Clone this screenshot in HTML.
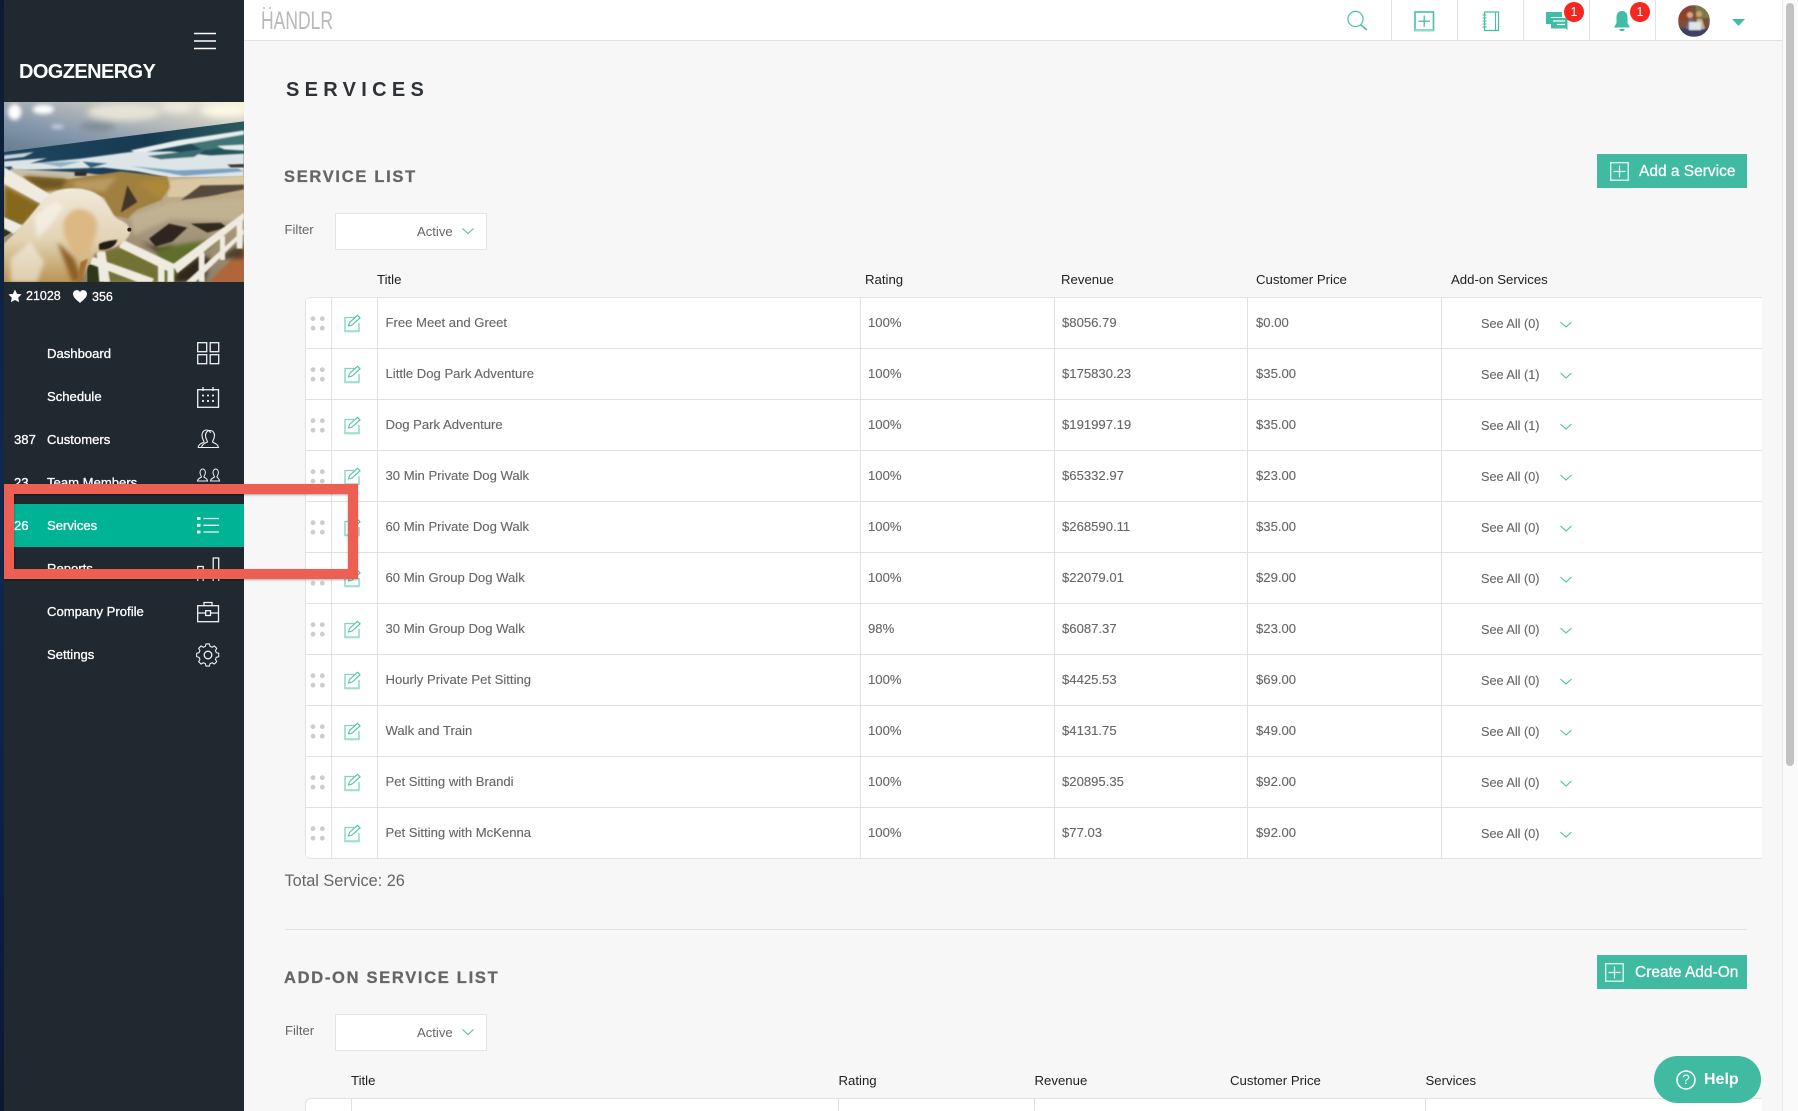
<!DOCTYPE html>
<html><head><meta charset="utf-8"><title>Services</title>
<style>
html,body{margin:0;padding:0;width:1798px;height:1111px;overflow:hidden;background:#f7f7f7}
body{position:relative;font-family:"Liberation Sans",Arial,sans-serif;color:#666;font-size:13.1px}
.a{position:absolute;white-space:nowrap}
svg{position:absolute;overflow:visible}
.n{position:absolute;color:#fff;white-space:nowrap;font-size:13.1px;line-height:20px;-webkit-text-stroke:.3px #fff}
.th{position:absolute;color:#222;font-size:13.2px;line-height:18px;white-space:nowrap}
.r{position:absolute;left:305px;width:1457px;height:51px;background:#fff;border-top:1px solid #e2e2e2;box-sizing:border-box;color:#666}
.r b{position:absolute;top:0;bottom:0;width:1px;background:#e2e2e2;font-weight:normal}
.r span{position:absolute;top:16px;line-height:18px;white-space:nowrap;font-size:13.1px;-webkit-text-stroke:.12px #666}
.r span.s{top:17px;font-size:12.700px}
.btn{position:absolute;background:#40bba2;color:#fff;height:34px;width:150px;left:1597px}
.btn span{position:absolute;top:8px;font-size:15.500px;line-height:20px;white-space:nowrap;-webkit-text-stroke:.25px #fff}
.sel{position:absolute;left:335px;width:152px;height:37px;background:#fff;border:1px solid #e4e4e4;box-sizing:border-box}
.sel span{position:absolute;left:81px;top:9px;line-height:18px;font-size:13.1px}
h1,h2{margin:0;position:absolute;white-space:nowrap}
h2{font-size:16.500px;line-height:20px;letter-spacing:1.7px;color:#666;font-weight:bold;-webkit-text-stroke:.3px #666}
</style></head><body>

<svg width="0" height="0" style="position:absolute">
<defs>
<g id="ed" fill="none">
<path d="M10 1.500H1v14h14V7" stroke="#7dd4bf" stroke-width="1.300"/>
<path d="M1 15.200h14" stroke="#9be0cf" stroke-width="2"/>
<path d="M4.500 11.500l1-3.500L13.500.8l2.600 2.500-8 7.200z" stroke="#4cc4a9" stroke-width="1.100" transform="translate(0 -1.500)"/>
</g>
<g id="dt" fill="#cdcdcd"><circle cx="2.200" cy="2.200" r="2.400"/><circle cx="11.500" cy="2.200" r="2.400"/><circle cx="2.200" cy="11.700" r="2.400"/><circle cx="11.500" cy="11.700" r="2.400"/></g>
<path id="ch" d="M.5 .5L6 5.500 11.500 .5" fill="none" stroke="#45c3a9" stroke-width="1.100"/>
</defs>
</svg>

<!-- main rows -->
<div class="r" style="top:297px;border-top-left-radius:6px"><b style="left:26px"></b><b style="left:72px"></b><b style="left:555px"></b><b style="left:749px"></b><b style="left:942px"></b><b style="left:1136px"></b><span style="left:80.500px">Free Meet and Greet</span><span style="left:563px">100%</span><span style="left:757px">$8056.79</span><span style="left:951px">$0.00</span><span class="s" style="left:1176px">See All (0)</span></div>
<div class="r" style="top:348px"><b style="left:26px"></b><b style="left:72px"></b><b style="left:555px"></b><b style="left:749px"></b><b style="left:942px"></b><b style="left:1136px"></b><span style="left:80.500px">Little Dog Park Adventure</span><span style="left:563px">100%</span><span style="left:757px">$175830.23</span><span style="left:951px">$35.00</span><span class="s" style="left:1176px">See All (1)</span></div>
<div class="r" style="top:399px"><b style="left:26px"></b><b style="left:72px"></b><b style="left:555px"></b><b style="left:749px"></b><b style="left:942px"></b><b style="left:1136px"></b><span style="left:80.500px">Dog Park Adventure</span><span style="left:563px">100%</span><span style="left:757px">$191997.19</span><span style="left:951px">$35.00</span><span class="s" style="left:1176px">See All (1)</span></div>
<div class="r" style="top:450px"><b style="left:26px"></b><b style="left:72px"></b><b style="left:555px"></b><b style="left:749px"></b><b style="left:942px"></b><b style="left:1136px"></b><span style="left:80.500px">30 Min Private Dog Walk</span><span style="left:563px">100%</span><span style="left:757px">$65332.97</span><span style="left:951px">$23.00</span><span class="s" style="left:1176px">See All (0)</span></div>
<div class="r" style="top:501px"><b style="left:26px"></b><b style="left:72px"></b><b style="left:555px"></b><b style="left:749px"></b><b style="left:942px"></b><b style="left:1136px"></b><span style="left:80.500px">60 Min Private Dog Walk</span><span style="left:563px">100%</span><span style="left:757px">$268590.11</span><span style="left:951px">$35.00</span><span class="s" style="left:1176px">See All (0)</span></div>
<div class="r" style="top:552px"><b style="left:26px"></b><b style="left:72px"></b><b style="left:555px"></b><b style="left:749px"></b><b style="left:942px"></b><b style="left:1136px"></b><span style="left:80.500px">60 Min Group Dog Walk</span><span style="left:563px">100%</span><span style="left:757px">$22079.01</span><span style="left:951px">$29.00</span><span class="s" style="left:1176px">See All (0)</span></div>
<div class="r" style="top:603px"><b style="left:26px"></b><b style="left:72px"></b><b style="left:555px"></b><b style="left:749px"></b><b style="left:942px"></b><b style="left:1136px"></b><span style="left:80.500px">30 Min Group Dog Walk</span><span style="left:563px">98%</span><span style="left:757px">$6087.37</span><span style="left:951px">$23.00</span><span class="s" style="left:1176px">See All (0)</span></div>
<div class="r" style="top:654px"><b style="left:26px"></b><b style="left:72px"></b><b style="left:555px"></b><b style="left:749px"></b><b style="left:942px"></b><b style="left:1136px"></b><span style="left:80.500px">Hourly Private Pet Sitting</span><span style="left:563px">100%</span><span style="left:757px">$4425.53</span><span style="left:951px">$69.00</span><span class="s" style="left:1176px">See All (0)</span></div>
<div class="r" style="top:705px"><b style="left:26px"></b><b style="left:72px"></b><b style="left:555px"></b><b style="left:749px"></b><b style="left:942px"></b><b style="left:1136px"></b><span style="left:80.500px">Walk and Train</span><span style="left:563px">100%</span><span style="left:757px">$4131.75</span><span style="left:951px">$49.00</span><span class="s" style="left:1176px">See All (0)</span></div>
<div class="r" style="top:756px"><b style="left:26px"></b><b style="left:72px"></b><b style="left:555px"></b><b style="left:749px"></b><b style="left:942px"></b><b style="left:1136px"></b><span style="left:80.500px">Pet Sitting with Brandi</span><span style="left:563px">100%</span><span style="left:757px">$20895.35</span><span style="left:951px">$92.00</span><span class="s" style="left:1176px">See All (0)</span></div>
<div class="r" style="top:807px;height:52px;border-bottom:1px solid #e2e2e2;border-bottom-left-radius:6px"><b style="left:26px"></b><b style="left:72px"></b><b style="left:555px"></b><b style="left:749px"></b><b style="left:942px"></b><b style="left:1136px"></b><span style="left:80.500px">Pet Sitting with McKenna</span><span style="left:563px">100%</span><span style="left:757px">$77.03</span><span style="left:951px">$92.00</span><span class="s" style="left:1176px">See All (0)</span></div>
<div class="a" style="left:305px;top:300px;width:1px;height:555px;background:#e2e2e2"></div>

<!-- row icons -->
<svg style="left:0;top:0" width="1798" height="900">
<use href="#dt" x="310.800" y="316.500"/><use href="#dt" x="310.800" y="367.500"/><use href="#dt" x="310.800" y="418.500"/><use href="#dt" x="310.800" y="469.500"/><use href="#dt" x="310.800" y="520.500"/><use href="#dt" x="310.800" y="571.500"/><use href="#dt" x="310.800" y="622.500"/><use href="#dt" x="310.800" y="673.500"/><use href="#dt" x="310.800" y="724.500"/><use href="#dt" x="310.800" y="775.500"/><use href="#dt" x="310.800" y="826.500"/>
<use href="#ed" x="344" y="316"/><use href="#ed" x="344" y="367"/><use href="#ed" x="344" y="418"/><use href="#ed" x="344" y="469"/><use href="#ed" x="344" y="520"/><use href="#ed" x="344" y="571"/><use href="#ed" x="344" y="622"/><use href="#ed" x="344" y="673"/><use href="#ed" x="344" y="724"/><use href="#ed" x="344" y="775"/><use href="#ed" x="344" y="826"/>
<use href="#ch" x="1560" y="321.500"/><use href="#ch" x="1560" y="372.500"/><use href="#ch" x="1560" y="423.500"/><use href="#ch" x="1560" y="474.500"/><use href="#ch" x="1560" y="525.500"/><use href="#ch" x="1560" y="576.500"/><use href="#ch" x="1560" y="627.500"/><use href="#ch" x="1560" y="678.500"/><use href="#ch" x="1560" y="729.500"/><use href="#ch" x="1560" y="780.500"/><use href="#ch" x="1560" y="831.500"/>
</svg>

<!-- top bar -->
<div class="a" style="left:244px;top:0;width:1538px;height:41px;background:#fff;border-bottom:1px solid #e2e2e2;box-sizing:border-box"></div>
<svg style="left:261px;top:6px" width="80" height="28">
<text x="0" y="23" font-family="Liberation Sans" font-size="25" fill="#b9b9b9" textLength="72" lengthAdjust="spacingAndGlyphs">HANDLR</text>
<circle cx="3" cy="2" r="1" fill="#b9b9b9"/><circle cx="9" cy="2" r="1" fill="#b9b9b9"/>
</svg>
<div class="a" style="left:1391px;top:0;width:1px;height:40px;background:#e2e2e2"></div>
<div class="a" style="left:1457px;top:0;width:1px;height:40px;background:#e2e2e2"></div>
<div class="a" style="left:1523px;top:0;width:1px;height:40px;background:#e2e2e2"></div>
<div class="a" style="left:1589px;top:0;width:1px;height:40px;background:#e2e2e2"></div>
<div class="a" style="left:1655px;top:0;width:1px;height:40px;background:#e2e2e2"></div>
<svg style="left:0;top:0" width="1798" height="41" fill="none" stroke="#47c0a8">
<circle cx="1355.500" cy="19" r="7.600" stroke-width="1.200"/><path d="M1361 25l6 5" stroke-width="1.500"/>
<rect x="1415" y="12" width="18.500" height="18.500" stroke-width="1.600"/><path d="M1424.200 15.500v11.500M1418.500 21.200h11.500" stroke-width="1.300"/><path d="M1415 30h18.500" stroke="#8ddbc9" stroke-width="2"/>
<rect x="1484.500" y="12" width="14" height="18.500" stroke-width="1.300"/><path d="M1495.500 12v18.500" stroke-width="1.100"/><path d="M1482.500 15h4M1482.500 18h4M1482.500 21h4M1482.500 24h4M1482.500 27h4" stroke-width="1"/>
<path d="M1546 12h16v5h-11v7h-5z" fill="#42bda5" stroke="none"/><path d="M1551 18h16.500v12l-2-1.500H1551z" fill="#42bda5" stroke="none"/><path d="M1553 21h12M1557 24.500h8" stroke="#fff" stroke-width="1.200"/>
<path d="M1622 11c-4 0-5.500 3-5.500 6.500v5.500l-2.500 4.500h16l-2.500-4.500v-5.500c0-3.500-1.500-6.500-5.500-6.500z" fill="#42bda5" stroke="none"/><path d="M1619 29h6l-1.500 2h-3z" fill="#42bda5" stroke="none"/>
<path d="M1732 19h13l-6.500 7z" fill="#42bda5" stroke="none"/>
</svg>
<div class="a" style="left:1564px;top:2px;width:20px;height:20px;border-radius:50%;background:#f7271f;color:#fff;font-size:12.500px;line-height:20px;text-align:center">1</div>
<div class="a" style="left:1630px;top:2px;width:20px;height:20px;border-radius:50%;background:#f7271f;color:#fff;font-size:12.500px;line-height:20px;text-align:center">1</div>
<svg style="left:1678px;top:5px" width="32" height="32" viewBox="0 0 32 32">
<defs><clipPath id="av"><circle cx="16" cy="16" r="16"/></clipPath><filter id="abl"><feGaussianBlur stdDeviation=".7"/></filter></defs>
<g clip-path="url(#av)"><g filter="url(#abl)">
<rect width="32" height="32" fill="#7a5038"/><rect x="0" y="0" width="12" height="16" fill="#8d3f2c"/><rect x="18" y="0" width="14" height="13" fill="#7a7a48"/><rect y="23" width="32" height="9" fill="#3c3f62"/>
<circle cx="12" cy="10" r="3" fill="#d9a57f"/><circle cx="21" cy="9" r="3" fill="#caa06f"/><path d="M8 24l3-10h4l2 10z" fill="#5b7294"/><path d="M17 24l2-10h5l3 10z" fill="#c4b396"/><rect x="11" y="17" width="12" height="8" fill="#dfe4e6"/>
</g></g></svg>

<!-- scrollbar -->
<div class="a" style="left:1782px;top:0;width:16px;height:1111px;background:#fafafa;border-left:1px solid #e9e9e9;box-sizing:border-box"></div>
<div class="a" style="left:1786px;top:3px;width:8px;height:763px;background:#c1c1c1;border-radius:4px"></div>

<!-- page headings -->
<h1 style="left:286px;top:79px;font-size:20px;line-height:23px;letter-spacing:5.300px;color:#2f3338;font-weight:bold">SERVICES</h1>
<h2 style="left:284px;top:167px">SERVICE LIST</h2>
<div class="btn" style="top:154px"><span style="left:42px">Add a Service</span></div>
<svg style="left:1610px;top:162px" width="19" height="19" fill="none" stroke="#e6f7f3"><rect x=".7" y=".7" width="17.500" height="17.500" stroke-width="1.300"/><path d="M9.500 3.500v12M3.500 9.500h12" stroke-width="1.200"/></svg>
<div class="a" style="left:284.500px;top:222px;line-height:16px">Filter</div>
<div class="sel" style="top:213px"><span>Active</span></div>
<svg style="left:462px;top:228px" width="13" height="8"><use href="#ch"/></svg>
<div class="th" style="left:377px;top:271px">Title</div>
<div class="th" style="left:865px;top:271px">Rating</div>
<div class="th" style="left:1061px;top:271px">Revenue</div>
<div class="th" style="left:1256px;top:271px">Customer Price</div>
<div class="th" style="left:1451px;top:271px">Add-on Services</div>

<div class="a" style="left:284.500px;top:871px;font-size:16.300px;line-height:20px">Total Service: 26</div>
<div class="a" style="left:285px;top:929px;width:1462px;height:1px;background:#e2e2e2"></div>
<h2 style="left:284px;top:968px">ADD-ON SERVICE LIST</h2>
<div class="btn" style="top:955px"><span style="left:38px">Create Add-On</span></div>
<svg style="left:1605px;top:963px" width="19" height="19" fill="none" stroke="#e6f7f3"><rect x=".7" y=".7" width="17.500" height="17.500" stroke-width="1.300"/><path d="M9.500 3.500v12M3.500 9.500h12" stroke-width="1.200"/></svg>
<div class="a" style="left:285px;top:1023px;line-height:16px">Filter</div>
<div class="sel" style="top:1014px"><span>Active</span></div>
<svg style="left:462px;top:1029px" width="13" height="8"><use href="#ch"/></svg>
<div class="th" style="left:351px;top:1072px">Title</div>
<div class="th" style="left:838.500px;top:1072px">Rating</div>
<div class="th" style="left:1034.500px;top:1072px">Revenue</div>
<div class="th" style="left:1230px;top:1072px">Customer Price</div>
<div class="th" style="left:1425.500px;top:1072px">Services</div>
<div class="a" style="left:305px;top:1098px;width:1457px;height:13px;background:#fff;border-top:1px solid #e2e2e2;border-left:1px solid #e2e2e2;border-top-left-radius:6px;box-sizing:border-box"></div>
<div class="a" style="left:351px;top:1098px;width:1px;height:13px;background:#e2e2e2"></div>
<div class="a" style="left:838px;top:1098px;width:1px;height:13px;background:#e2e2e2"></div>
<div class="a" style="left:1034px;top:1098px;width:1px;height:13px;background:#e2e2e2"></div>
<div class="a" style="left:1425px;top:1098px;width:1px;height:13px;background:#e2e2e2"></div>

<!-- help -->
<div class="a" style="left:1654px;top:1056px;width:107px;height:47px;border-radius:24px;background:#40bba2"></div>
<svg style="left:1676px;top:1070px" width="20" height="20" fill="none"><circle cx="10" cy="10" r="9" stroke="#fff" stroke-width="1.500"/></svg>
<div class="a" style="left:1676px;top:1070px;width:20px;text-align:center;color:#fff;font-size:13.500px;line-height:20px">?</div>
<div class="a" style="left:1704px;top:1070px;color:#fff;font-size:16px;line-height:20px;font-weight:bold">Help</div>

<!-- sidebar -->
<div class="a" style="left:0;top:0;width:4px;height:1111px;background:linear-gradient(#0d1b30,#10294d 45%,#0b1f43 80%,#0c1830)"></div>
<div class="a" style="left:4px;top:0;width:240px;height:1111px;background:#202830"></div>
<svg style="left:194px;top:32px" width="22" height="18"><path d="M0 1.500h22M0 9h22M0 16.500h22" stroke="#fff" stroke-width="1.500"/></svg>
<div class="a" style="left:19px;top:60px;color:#fff;font-weight:bold;font-size:20px;line-height:24px;letter-spacing:-.6px">DOGZENERGY</div>

<!-- photo -->
<svg style="left:4px;top:102px" width="240" height="180" viewBox="0 0 720 540">
<defs>
<linearGradient id="sky" x1="0" y1="1" x2="1" y2="0"><stop offset="0" stop-color="#5f7689"/><stop offset=".35" stop-color="#8597ab"/><stop offset=".7" stop-color="#c2c3bf"/><stop offset="1" stop-color="#f7f2da"/></linearGradient>
<linearGradient id="sea" x1="0" y1="0" x2="1" y2="0"><stop offset="0" stop-color="#1f4560"/><stop offset=".6" stop-color="#173a52"/><stop offset="1" stop-color="#2b5a5c"/></linearGradient>
<linearGradient id="fur" x1="0" y1="0" x2="0" y2="1"><stop offset="0" stop-color="#f0e8da"/><stop offset=".55" stop-color="#e2d3b4"/><stop offset="1" stop-color="#b99455"/></linearGradient>
<linearGradient id="sand" x1="0" y1="0" x2="0" y2="1"><stop offset="0" stop-color="#cbb68f"/><stop offset=".45" stop-color="#a99a7e"/><stop offset="1" stop-color="#8d7f66"/></linearGradient>
<filter id="bl" x="-20%" y="-20%" width="140%" height="140%"><feGaussianBlur stdDeviation="6"/></filter>
<filter id="bl1" x="-10%" y="-10%" width="120%" height="120%"><feGaussianBlur stdDeviation="2.500"/></filter>
<filter id="bl2" x="-30%" y="-30%" width="160%" height="160%"><feGaussianBlur stdDeviation="10"/></filter>
<clipPath id="pc"><rect width="720" height="540"/></clipPath>
</defs>
<g clip-path="url(#pc)">
<rect width="720" height="170" fill="url(#sky)"/>
<g filter="url(#bl2)"><ellipse cx="360" cy="30" rx="110" ry="26" fill="#e6e3d6"/><ellipse cx="520" cy="15" rx="50" ry="18" fill="#ece8da"/><ellipse cx="280" cy="74" rx="55" ry="14" fill="#7f8b96"/><ellipse cx="660" cy="25" rx="70" ry="20" fill="#fbf8e6"/></g>
<g filter="url(#bl)" fill="#fff"><ellipse cx="32" cy="30" rx="20" ry="24"/><ellipse cx="118" cy="22" rx="32" ry="14"/><ellipse cx="160" cy="74" rx="20" ry="5" fill="#dde"/></g>
<path d="M0 150L720 58V260H0z" fill="url(#sea)"/>
<g filter="url(#bl1)">
<path d="M0 160L90 150 60 165 0 172z" fill="#c6d3da"/>
<path d="M380 145L520 115 720 85V98L560 125 400 155z" fill="#e8eef0"/>
<path d="M560 125L720 100V130L600 145z" fill="#3f7574"/>
<path d="M640 132L720 128V146L660 142z" fill="#e3ecee"/>
<path d="M20 190L230 170 380 150 500 148 620 160 720 155V225L500 228 400 208 300 197 30 205z" fill="#dde5e8"/>
<path d="M0 178L130 168 60 190 0 195z" fill="#dbe3e6"/>
<path d="M235 178l75 6-50 14z" fill="#2f6187"/>
<path d="M430 162L610 140 570 165 470 172z" fill="#3b6c72"/>
<path d="M380 192L520 205 700 198 720 208 540 222z" fill="#7ba3c1"/>
<path d="M100 182L230 178 170 195z" fill="#93b2c4"/>
</g>
<rect x="0" y="225" width="720" height="315" fill="url(#sand)"/>
<path d="M20 200L240 212 310 222 0 240z" fill="#c9bfa8" filter="url(#bl1)"/>
<path d="M495 235L720 222V250L530 285 490 285z" fill="#dac8a4" filter="url(#bl1)"/>
<path d="M55 222L190 232 350 208 490 225 496 255 470 295 400 322 372 350 330 340 300 285 160 262 110 272z" fill="#a0803f" filter="url(#bl1)"/>
<path d="M60 222L190 232 170 260 110 262z" fill="#6e5620" filter="url(#bl)"/>
<path d="M200 240L340 225 300 270 220 262z" fill="#b89a62" filter="url(#bl)"/>
<path d="M370 250l30 50-50 32 10-40z" fill="#43352a" filter="url(#bl1)"/>
<path d="M400 240l90-10 5 30-30 30z" fill="#ad8837" filter="url(#bl)"/>
<path d="M0 250L115 310 60 368 0 350z" fill="#86681f" filter="url(#bl)"/>
<path d="M0 345L60 370 0 400z" fill="#44541f" filter="url(#bl)"/>
<path d="M0 380L30 385 0 405z" fill="#2a351a"/>
<path d="M530 295l60-45 130-2v14l-100 20z" fill="#544a3c" filter="url(#bl1)"/>
<path d="M435 410l60-45 55 12-45 42-50 15z" fill="#2e261e" filter="url(#bl1)"/>
<path d="M560 365l90-3 20 14-60 16z" fill="#32291f" filter="url(#bl1)"/>
<path d="M410 420l60 20 40-10-30 30z" fill="#2f261e" filter="url(#bl)"/>
<path d="M380 340l120-40 220-10v70L500 350 390 400z" fill="#c7b999" filter="url(#bl)" opacity=".7"/>
<path d="M212 208h38l-4 14h-34z" fill="#2c2a28" filter="url(#bl1)"/>
<path d="M670 188l50-2v10h-40z" fill="#3a332c" filter="url(#bl1)"/>
<path d="M300 445L370 430 460 470 470 540H260z" fill="#737234" filter="url(#bl)"/>
<path d="M460 440L570 420 640 415 600 450 520 540H470z" fill="#5f6e2a" filter="url(#bl)"/>
<path d="M250 490L300 480V540H250z" fill="#2c3819"/>
<path d="M520 510L590 460 620 470 600 540H510z" fill="#33281c" filter="url(#bl)"/>
<path d="M615 540L720 435V540z" fill="#b0663a" filter="url(#bl1)"/>
<path d="M650 470h70V420l-50 30z" fill="#4f4029" filter="url(#bl)"/>
<!-- rails -->
<g fill="#f0ebe0" filter="url(#bl1)">
<path d="M0 195L140 278 115 308 0 245z"/><path d="M0 345L60 372 30 396 0 380z"/>
<path d="M355 412L515 488 505 514 345 436z"/>
<path d="M505 488L720 332V352L520 514z"/>
<path d="M545 540L720 382V396L575 540z"/>
<path d="M262 463L450 530 445 540H400L258 486z"/>
<path d="M278 448h26l14 92h-32z"/><path d="M462 492h20v48h-20z"/><path d="M490 505h20v35h-20z"/>
<path d="M584 452h18v88h-18z"/><path d="M648 402h15v72h-15z"/><path d="M698 355h18v85h-18z"/>
</g>
<!-- dog -->
<path d="M0 425C60 370 95 320 125 285C165 250 250 250 292 285C318 312 325 345 345 352C375 365 388 385 372 405C352 435 310 445 275 452C255 480 235 540 222 540H0z" fill="url(#fur)" filter="url(#bl1)"/>
<path d="M215 322C258 318 285 345 278 385C268 430 248 468 228 475C200 448 175 402 178 365C182 345 195 330 215 322z" fill="#dcb882" filter="url(#bl)"/>
<path d="M160 420l50 50 25 65-30 5z" fill="#8c5e28" filter="url(#bl)"/>
<path d="M230 480l22 -10-20 70h-15z" fill="#a07234" filter="url(#bl1)"/>
<path d="M285 426c25-12 45-10 55-13-5 22-30 34-55 30z" fill="#241c16" filter="url(#bl1)"/>
<circle cx="376" cy="383" r="6" fill="#2a211a"/>
<path d="M20 470l60-50 40 60-20 60H20z" fill="#f7f2e6" opacity=".6" filter="url(#bl)"/>
<path d="M90 340l60-40 30 10-40 60-40 40z" fill="#f8f4ec" opacity=".7" filter="url(#bl)"/>
</g>
</svg>

<!-- stats -->
<svg style="left:8px;top:289px" width="14" height="14" viewBox="0 0 24 24"><path d="M12 1l3.400 7.300 7.900 1-5.800 5.400 1.500 7.900L12 18.800l-7 3.800 1.500-7.900L.7 9.300l7.900-1z" fill="#fff"/></svg>
<div class="a" style="left:26px;top:287px;color:#fff;font-size:12.500px;line-height:18px;-webkit-text-stroke:.25px #fff">21028</div>
<svg style="left:73px;top:290px" width="14" height="13" viewBox="0 0 24 22"><path d="M12 22C5 16 0 12 0 6.500 0 2.800 3 0 6.500 0 9 0 11 1.200 12 3.200 13 1.200 15 0 17.500 0 21 0 24 2.800 24 6.500 24 12 19 16 12 22z" fill="#fff"/></svg>
<div class="a" style="left:92px;top:288px;color:#fff;font-size:12.500px;line-height:18px;-webkit-text-stroke:.25px #fff">356</div>

<!-- nav -->
<div class="a" style="left:14px;top:504px;width:230px;height:43px;background:#00b394"></div>
<div class="n" style="left:47px;top:344px">Dashboard</div>
<div class="n" style="left:47px;top:387px">Schedule</div>
<div class="n" style="left:14px;top:430px">387</div><div class="n" style="left:47px;top:430px">Customers</div>
<div class="n" style="left:14px;top:473px">23</div><div class="n" style="left:47px;top:473px">Team Members</div>
<div class="n" style="left:14px;top:516px">26</div><div class="n" style="left:47px;top:516px">Services</div>
<div class="n" style="left:47px;top:559px">Reports</div>
<div class="n" style="left:47px;top:602px">Company Profile</div>
<div class="n" style="left:47px;top:645px">Settings</div>

<svg style="left:0;top:0" width="244" height="700" fill="none" stroke="#f2f2f2" stroke-width="1.300">
<!-- dashboard -->
<rect x="197.700" y="342.700" width="9" height="9"/><rect x="210.200" y="342.700" width="8.500" height="9"/><rect x="197.700" y="354.700" width="9" height="9"/><rect x="210.200" y="354.700" width="8.500" height="9"/>
<!-- schedule -->
<rect x="197.700" y="389.700" width="20.800" height="17.600"/><path d="M203 387v4M213 387v4"/><path d="M202 395.500h2M207 395.500h2M212 395.500h2M202 401h2M207 401h2M212 401h2" stroke-width="1.800"/>
<!-- customers -->
<path d="M198 447.500c.5-3 3-4 6-5.500 0-1.500-2-3-2-6.500 0-3.500 2-5.500 4.500-5.500 2 0 3.500 1 4 3M198 447.500h20.500c-.5-3-3-4-6-5.500 0-1.500 2-3 2-6.500 0-3-2-5-4.500-5-2.500 0-4.500 2-4.500 5 0 3.500 2 5 2 6.500-3 1-5.500 2.500-6 5.500" stroke-width="1.100"/>
<!-- team -->
<path d="M197.500 481c.5-3 3-3 4-4 0-1-1.500-2-1.500-4.500 0-2 1.200-3.500 2.700-3.500s2.700 1.500 2.700 3.500c0 2.500-1.500 3.500-1.500 4.500 1 1 3 1 3.700 4zM210.500 481c.5-3 3-3 4-4 0-1-1.500-2-1.500-4.500 0-2 1.200-3.500 2.700-3.500s2.700 1.500 2.700 3.500c0 2.500-1.500 3.500-1.500 4.500 1 1 2 1 2.700 4z" stroke-width="1"/>
<!-- services -->
<path d="M197 518.500h3.500M197 525.300h3.500M197 532h3.500" stroke-width="3"/><path d="M203.500 518.500h15.500M203.500 525.300h15.500M203.500 532h15.500"/>
<!-- reports -->
<path d="M197.700 581v-14.500h5.500V581M213.200 581v-23h5.500V581"/>
<!-- company -->
<rect x="197.700" y="605.700" width="20.800" height="16"/><path d="M204 605.500v-3h8v3M197.700 613h8M210.500 613h8"/><rect x="205.700" y="610.700" width="4.800" height="4.800"/>
<!-- gear -->
<circle cx="208" cy="655" r="3.800"/>
<path d="M206 644.500h4l.7 2.800 2.400 1 2.500-1.500 2.800 2.800-1.500 2.500 1 2.400 2.800.7v4l-2.800.7-1 2.400 1.500 2.500-2.800 2.800-2.500-1.500-2.400 1-.7 2.800h-4l-.7-2.800-2.400-1-2.500 1.500-2.800-2.800 1.500-2.500-1-2.400-2.800-.7v-4l2.800-.7 1-2.400-1.500-2.500 2.800-2.800 2.500 1.500 2.400-1z" transform="translate(208 655) scale(.87) translate(-208.350 -657.200)" stroke-width="1.200"/>
</svg>

<!-- red annotation -->
<div class="a" style="left:4px;top:484px;width:354px;height:95px;border:10px solid #ec5f52;box-sizing:border-box;box-shadow:0 1px 2px rgba(0,0,0,.3),inset 0 1px 2px rgba(0,0,0,.35)"></div>
</body></html>
